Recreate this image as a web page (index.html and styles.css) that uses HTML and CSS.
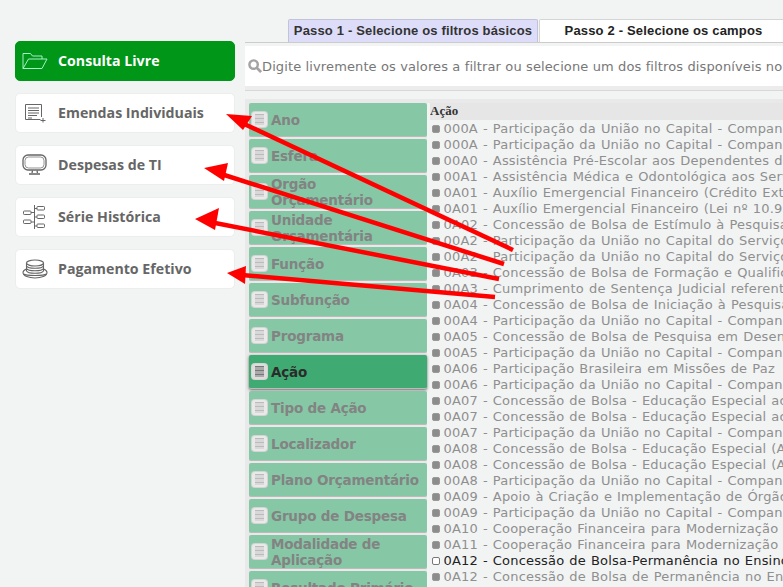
FILE: index.html
```html
<!DOCTYPE html>
<html lang="pt-BR">
<head>
<meta charset="utf-8">
<title>Consulta Livre</title>
<link rel="stylesheet" href="styles.css">
</head>
<body>
<div class="page">
  <nav class="side">
    <a class="nav active">
      <svg class="ico" viewBox="0 0 26 18" fill="none" stroke="#a8f0c8" stroke-width="1"><path d="M1 16.500V1.500H8.500L10.500 4H20V7"/><path d="M1 16.500H20L25 7H6.500Z"/></svg>
      <span>Consulta Livre</span>
    </a>
    <a class="nav">
      <svg class="ico" viewBox="0 0 26 20" fill="none" stroke="#666" stroke-width="1"><path d="M18.500 16.500H3.500V1.500H19.500V14"/><path d="M6 5H17M6 7.500H17M6 10H17M6 12.500H15M6 15H10"/><path d="M21 15V19.500M18.500 17.500H23.500"/></svg>
      <span>Emendas Individuais</span>
    </a>
    <a class="nav">
      <svg class="ico" viewBox="0 0 26 22" fill="none" stroke="#666" stroke-width="1.300"><rect x="1" y="1" width="23" height="15" rx="5"/><rect x="3" y="3" width="19" height="11" rx="3.500" stroke-width=".7"/><path d="M10.500 16.500L10 19M15 16.500L15.500 19"/><rect x="7" y="19" width="11" height="2" fill="#888" stroke="none"/></svg>
      <span>Despesas de TI</span>
    </a>
    <a class="nav">
      <svg class="ico" viewBox="0 0 26 26" fill="none" stroke="#666" stroke-width="1"><path d="M12.500 1V25M12.500 4.500H15M12.500 13H15M12.500 22H15M9 8.500H12.500M9 18H12.500"/><rect x="15" y="2.500" width="7.500" height="3.500" rx=".8"/><rect x="15" y="11" width="7.500" height="3.500" rx=".8"/><rect x="15" y="20" width="7.500" height="3.500" rx=".8"/><rect x="1.500" y="7" width="7.500" height="3.500" rx=".8"/><rect x="1.500" y="16" width="7.500" height="3.500" rx=".8"/></svg>
      <span>Série Histórica</span>
    </a>
    <a class="nav">
      <svg class="ico" viewBox="0 0 26 20" fill="none" stroke="#666" stroke-width="1.100"><ellipse cx="13" cy="4" rx="8.500" ry="3"/><path d="M4.500 4V12M21.500 4V12M4.500 7C6 10 20 10 21.500 7M4.500 9.500C6 12.500 20 12.500 21.500 9.500"/><path d="M4.500 10C2 11 1 12 1 13.500C1 17 7 19 13 19C19 19 25 17 25 13.500C25 12 24 11 21.500 10"/><path d="M4.500 12C6 15 20 15 21.500 12M1.500 15C4 17 22 17 24.500 15"/></svg>
      <span>Pagamento Efetivo</span>
    </a>
  </nav>

  <main class="main">
    <div class="tabs">
      <div class="tab current">Passo 1 - Selecione os filtros básicos</div>
      <div class="tab">Passo 2 - Selecione os campos</div>
    </div>
    <div class="search">
      <svg class="lens" viewBox="0 0 15 15" fill="none" stroke="#a3a3a3"><circle cx="6" cy="6" r="4.500" stroke-width="2.600"/><path d="M9.500 9.500L14 14" stroke-width="3"/></svg>
      <span class="hint">Digite livremente os valores a filtrar ou selecione um dos filtros disponíveis no painel</span>
    </div>
    <div class="panel">
      <div class="filters">
        <div class="filter"><i class="fi"></i><span>Ano</span></div>
        <div class="filter"><i class="fi"></i><span>Esfera</span></div>
        <div class="filter"><i class="fi"></i><span>Orgão Orçamentário</span></div>
        <div class="filter"><i class="fi"></i><span>Unidade Orçamentária</span></div>
        <div class="filter"><i class="fi"></i><span>Função</span></div>
        <div class="filter"><i class="fi"></i><span>Subfunção</span></div>
        <div class="filter"><i class="fi"></i><span>Programa</span></div>
        <div class="filter on"><i class="fi"></i><span>Ação</span></div>
        <div class="filter"><i class="fi"></i><span>Tipo de Ação</span></div>
        <div class="filter"><i class="fi"></i><span>Localizador</span></div>
        <div class="filter"><i class="fi"></i><span>Plano Orçamentário</span></div>
        <div class="filter"><i class="fi"></i><span>Grupo de Despesa</span></div>
        <div class="filter"><i class="fi"></i><span>Modalidade de Aplicação</span></div>
        <div class="filter"><i class="fi"></i><span>Resultado Primário</span></div>
      </div>
      <div class="list">
        <div class="head">Ação</div>
        <div class="row"><i class="box"></i>000A - Participação da União no Capital - Companhia</div>
        <div class="row"><i class="box"></i>000A - Participação da União no Capital - Companhia</div>
        <div class="row"><i class="box"></i>00A0 - Assistência Pré-Escolar aos Dependentes dos</div>
        <div class="row"><i class="box"></i>00A1 - Assistência Médica e Odontológica aos Servidores</div>
        <div class="row"><i class="box"></i>0A01 - Auxílio Emergencial Financeiro (Crédito Extra</div>
        <div class="row"><i class="box"></i>0A01 - Auxílio Emergencial Financeiro (Lei nº 10.954</div>
        <div class="row"><i class="box"></i>0A02 - Concessão de Bolsa de Estímulo à Pesquisa</div>
        <div class="row"><i class="box"></i>00A2 - Participação da União no Capital do Serviço</div>
        <div class="row"><i class="box"></i>00A2 - Participação da União no Capital do Serviço</div>
        <div class="row"><i class="box"></i>0A03 - Concessão de Bolsa de Formação e Qualificação</div>
        <div class="row"><i class="box"></i>00A3 - Cumprimento de Sentença Judicial referente</div>
        <div class="row"><i class="box"></i>0A04 - Concessão de Bolsa de Iniciação à Pesquisa</div>
        <div class="row"><i class="box"></i>00A4 - Participação da União no Capital - Companhia</div>
        <div class="row"><i class="box"></i>0A05 - Concessão de Bolsa de Pesquisa em Desenvolvimento</div>
        <div class="row"><i class="box"></i>00A5 - Participação da União no Capital - Companhia</div>
        <div class="row"><i class="box"></i>0A06 - Participação Brasileira em Missões de Paz  (</div>
        <div class="row"><i class="box"></i>00A6 - Participação da União no Capital - Companhia</div>
        <div class="row"><i class="box"></i>0A07 - Concessão de Bolsa - Educação Especial aos</div>
        <div class="row"><i class="box"></i>0A07 - Concessão de Bolsa - Educação Especial aos</div>
        <div class="row"><i class="box"></i>00A7 - Participação da União no Capital - Companhia</div>
        <div class="row"><i class="box"></i>0A08 - Concessão de Bolsa - Educação Especial (Ações</div>
        <div class="row"><i class="box"></i>0A08 - Concessão de Bolsa - Educação Especial (Ações</div>
        <div class="row"><i class="box"></i>00A8 - Participação da União no Capital - Companhia</div>
        <div class="row"><i class="box"></i>0A09 - Apoio à Criação e Implementação de Órgãos</div>
        <div class="row"><i class="box"></i>00A9 - Participação da União no Capital - Companhia</div>
        <div class="row"><i class="box"></i>0A10 - Cooperação Financeira para Modernização de</div>
        <div class="row"><i class="box"></i>0A11 - Cooperação Financeira para Modernização de</div>
        <div class="row sel"><i class="box"></i>0A12 - Concessão de Bolsa-Permanência no Ensino</div>
        <div class="row"><i class="box"></i>0A12 - Concessão de Bolsa de Permanência no Ensino</div>
        <div class="row"><i class="box"></i>0A13 - Concessão de Bolsa de Permanência</div>
      </div>
    </div>
  </main>

  <svg class="arrows" viewBox="0 0 783 587" fill="#ff0000" stroke="none">
    <path d="M513 250L240 122" stroke="#ff0000" stroke-width="4.500"/><path d="M226 114L252 116L243 130Z"/>
    <path d="M504 264L218 173" stroke="#ff0000" stroke-width="4.500"/><path d="M204 168L228 163L224 181Z"/>
    <path d="M499 279L210 222" stroke="#ff0000" stroke-width="4.500"/><path d="M195 219L219 208L215 230Z"/>
    <path d="M495 297L242 275" stroke="#ff0000" stroke-width="4.500"/><path d="M227 273L246 266L245 284Z"/>
  </svg>
</div>
</body>
</html>
```
FILE: styles.css
```css
* { box-sizing: border-box; }
html, body { margin: 0; height: 100%; overflow: hidden; }
body { background: #f2f4f4; }
.page { position: relative; display: flex; width: 783px; height: 587px; overflow: hidden; }

.side { flex: none; width: 245px; padding: 41px 10px 0 15px; display: flex; flex-direction: column; gap: 12px; }
.nav { display: flex; align-items: center; height: 40px; background: #fff; border: 1px solid #eceeee; border-radius: 5px; padding-left: 6px; font: 700 14.2px/18px "Open Sans", sans-serif; color: #666; }
.nav.active { background: #009617; border-color: #009617; color: #fff; }
.ico { flex: none; width: 26px; height: 26px; margin-right: 10px; }

.main { flex: 1; min-width: 0; }
.tabs { display: flex; height: 24px; margin-top: 19px; padding-left: 43px; gap: 1px; border-bottom: 1px solid #ccc; }
.tab { flex: none; height: 23px; text-align: center; font: bold 13px/22px "Liberation Sans", sans-serif; letter-spacing: .17px; color: #222; background: #fff; border: 1px solid #d5d5d5; border-bottom: 0; border-radius: 2px 2px 0 0; width: 249px; white-space: nowrap; }
.tab.current { width: 250px; background: #ddddf9; color: #333; border-color: #c3c3d8; }

.search { display: flex; align-items: center; height: 44px; margin-top: 3px; background: #fff; border-bottom: 4px solid #ececec; font: 13px/18px "DejaVu Sans", sans-serif; letter-spacing: .12px; color: #777; white-space: nowrap; overflow: hidden; padding-left: 3px; }
.hint { padding-top: 1px; }
.lens { flex: none; width: 14px; height: 14px; }
.panel { display: flex; border-top: 1px solid #d8d8d8; padding: 12px 0 0 4px; background: linear-gradient(#e9e9e9, #e9e9e9) 0 8px / 100% 4px no-repeat, linear-gradient(#e9e9e9, #e9e9e9) 0 8px / 182px 100% no-repeat; }

.filters { flex: none; width: 178px; display: flex; flex-direction: column; gap: 2px; }
.filter { flex: none; display: flex; align-items: center; height: 34px; background: #86c8a5; border-radius: 2px; border-bottom: 1px solid #bbb; padding: 0 5px 0 3px; font: bold 13.5px/16px "DejaVu Sans", sans-serif; letter-spacing: -.2px; color: #838383; }
.filter span { padding-left: 4px; }
.filter.on { background: #3fab72; color: #2b2b2b; box-shadow: 0 1px 3px #666; }
.fi { flex: none; width: 15px; height: 15px; border-radius: 3px; background: repeating-linear-gradient(#bbb 0 1px, #d8d8d8 1px 4px) center / 9px 11px no-repeat, #e9e9e9; box-shadow: 0 0 0 1px #d4d4d4; }
.filter.on .fi { background: repeating-linear-gradient(#777 0 1px, #aaa 1px 4px) center / 9px 11px no-repeat, #ddd; }

.list { flex: 1; min-width: 0; margin-left: 3px; overflow: hidden; }
.head { height: 17px; background: #e6e6e6; font: bold 13px/15px "Liberation Serif", serif; color: #333; }
.row { display: flex; align-items: center; height: 16px; padding: 1px 0 0 2px; font: 13px/16px "DejaVu Sans", sans-serif; letter-spacing: .18px; word-spacing: .7px; color: #8f8f8f; white-space: pre; }
.box { flex: none; width: 8px; height: 8px; margin-right: 3.500px; background: #8c8c8c; border: 1px solid #999; border-radius: 2px; }
.sel { color: #222; }
.sel .box { background: #fff; border-color: #777; }

.arrows { position: absolute; left: 0; top: 0; width: 783px; height: 587px; pointer-events: none; }
```
